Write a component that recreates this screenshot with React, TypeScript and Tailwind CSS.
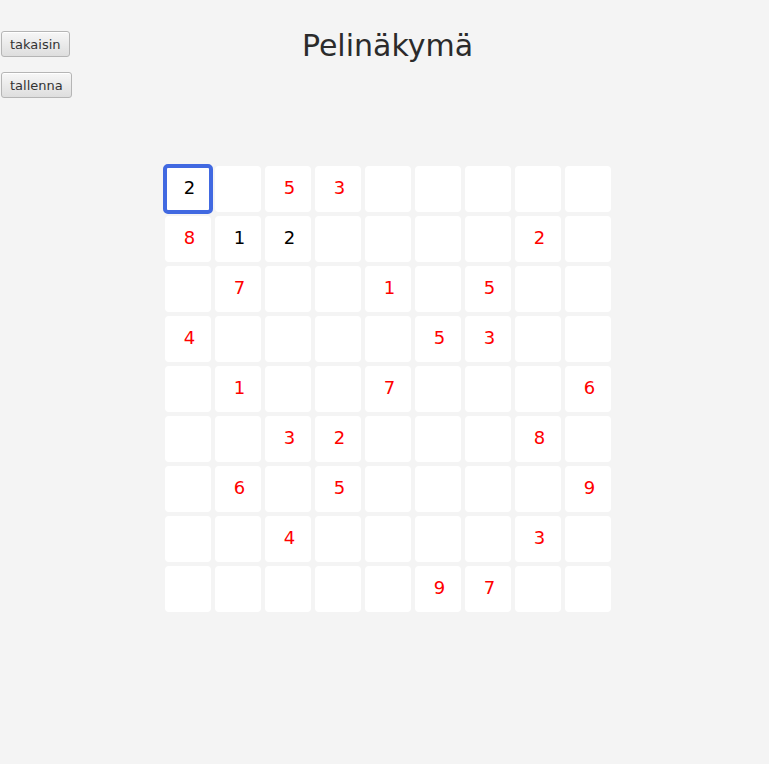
const R = "r";
const B = "b";
type Cell = [number, string] | null;

const rows: Cell[][] = [
  [[2, B], null, [5, R], [3, R], null, null, null, null, null],
  [[8, R], [1, B], [2, B], null, null, null, null, [2, R], null],
  [null, [7, R], null, null, [1, R], null, [5, R], null, null],
  [[4, R], null, null, null, null, [5, R], [3, R], null, null],
  [null, [1, R], null, null, [7, R], null, null, null, [6, R]],
  [null, null, [3, R], [2, R], null, null, null, [8, R], null],
  [null, [6, R], null, [5, R], null, null, null, null, [9, R]],
  [null, null, [4, R], null, null, null, null, [3, R], null],
  [null, null, null, null, null, [9, R], [7, R], null, null],
];

function Nappi({ label }: { label: string }) {
  return (
    <button className="h-[26px] px-[8px] rounded-[3px] border border-[#b5b5b5] bg-gradient-to-b from-[#f7f7f7] to-[#dedede] text-[13px] text-[#333333] leading-none shadow-[inset_0_1px_0_#ffffff]">
      {label}
    </button>
  );
}

export default function App() {
  return (
    <div className="min-h-[764px] w-full bg-[#f4f4f4] font-['DejaVu_Sans',sans-serif]">
      <div className="grid grid-cols-[1fr_auto_1fr] pt-[28px] pl-[1px]">
        <div className="flex flex-col items-start gap-[15px] mt-[3px]">
          <Nappi label="takaisin" />
          <Nappi label="tallenna" />
        </div>
        <h1 className="text-[30px] leading-[35px] text-[#2b2b2b] pl-[5px]">Pelinäkymä</h1>
        <div />
      </div>

      <div className="flex justify-center pl-[7px] mt-[68px]">
        <div className="grid grid-cols-9 gap-[4px]">
          {rows.map((row, i) =>
            row.map((c, j) => {
              const selected = i === 0 && j === 0;
              return (
                <div
                  key={i + "-" + j}
                  className="relative w-[46px] h-[46px] rounded-[4px] bg-white flex items-center justify-center pl-[3px] pb-[4px] text-[18px]"
                >
                  {c && (
                    <span className={c[1] === R ? "text-[#ff0000]" : "text-black"}>{c[0]}</span>
                  )}
                  {selected && (
                    <div className="absolute -inset-[2px] rounded-[5px] border-4 border-[#4169e1]" />
                  )}
                </div>
              );
            })
          )}
        </div>
      </div>
    </div>
  );
}
